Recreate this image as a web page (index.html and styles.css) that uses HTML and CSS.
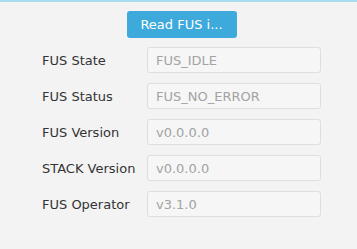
FILE: index.html
```html
<!DOCTYPE html>
<html>
<head>
    <title>FUS</title>
    <link rel="stylesheet" href="styles.css">
</head>
<body>
    <div class="panel">
        <div class="actions">
            <button class="read-btn">Read FUS i...</button>
        </div>
        <div class="fields">
            <label>FUS State</label>
            <input type="text" value="FUS_IDLE" readonly>
            <label>FUS Status</label>
            <input type="text" value="FUS_NO_ERROR" readonly>
            <label>FUS Version</label>
            <input type="text" value="v0.0.0.0" readonly>
            <label>STACK Version</label>
            <input type="text" value="v0.0.0.0" readonly>
            <label>FUS Operator</label>
            <input type="text" value="v3.1.0" readonly>
        </div>
    </div>
</body>
</html>
```

FILE: styles.css
```css
html, body {
    height: 100%;
}
body {
    margin: 0;
    background-color: #f3f3f3;
    border-top: 2px solid #a9dcec;
    box-sizing: border-box;
    font-family: 'DejaVu Sans', sans-serif;
    font-size: 13px;
    color: #333333;
}
.panel {
    width: 279px;
    padding: 9px 0 0 42px;
}
.actions {
    display: flex;
    justify-content: center;
    margin-bottom: 9px;
}
.read-btn {
    height: 27px;
    width: 110px;
    padding: 0;
    background-color: #3ea9db;
    color: white;
    border: none;
    border-radius: 3px;
    font-family: 'DejaVu Sans', sans-serif;
    font-size: 13px;
}
.fields {
    display: grid;
    grid-template-columns: 105px 174px;
    row-gap: 10px;
    align-items: center;
}
label {
    white-space: nowrap;
}
input {
    height: 26px;
    box-sizing: border-box;
    padding: 0 8px;
    background-color: #f6f6f6;
    border: 1px solid #dedede;
    border-radius: 3px;
    font-family: 'DejaVu Sans', sans-serif;
    font-size: 13px;
    color: #a3a3a3;
    outline: none;
}
```
